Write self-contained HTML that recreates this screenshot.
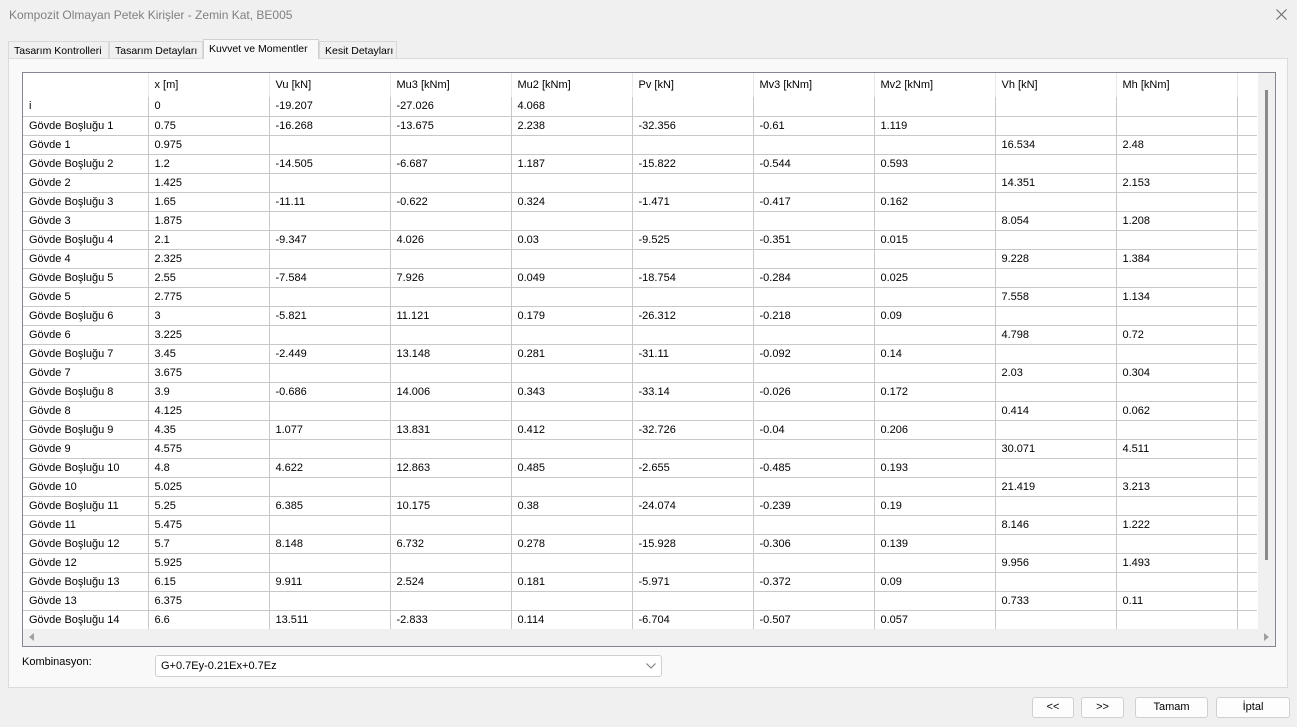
<!DOCTYPE html>
<html><head><meta charset="utf-8"><style>
*{box-sizing:border-box;margin:0;padding:0}
body{width:1297px;height:727px;background:#f0f0f0;font-family:"Liberation Sans",sans-serif;font-size:11px;color:#000;position:relative;overflow:hidden}
.abs{position:absolute}
#title{left:9px;top:8px;font-size:12px;color:#808080}
.tab{position:absolute;top:41px;height:17px;border:1px solid #d9d9d9;border-bottom:none;background:#f0f0f0;padding:3px 0 0 5px;font-size:10.5px;white-space:nowrap;overflow:hidden}
#panel{left:8px;top:58px;width:1280px;height:630px;background:#f9f9f9;border:1px solid #dcdcdc}
#grid{left:22px;top:72px;width:1254px;height:575px;border:1px solid #828790;background:#fff;overflow:hidden}
table{border-collapse:collapse;table-layout:fixed;position:absolute;left:0;top:0}
td{height:19px;border-right:1px solid #c8c8c8;border-bottom:1px solid #c8c8c8;padding:0 0 0 6px;white-space:nowrap;overflow:hidden;line-height:18px}
tr.h td{height:24px;border-bottom:none;border-right-color:#e8e8e8;line-height:22px;vertical-align:top;padding-top:1px}
td.f{border-right:none}
#vs{left:1235px;top:0;width:17px;height:556px;background:#f0f0f0}
#hs{left:0;top:556px;width:1252px;height:17px;background:#f0f0f0}
.btn{position:absolute;top:697px;height:21px;border:1px solid #d0d0d0;border-radius:3px;background:#fdfdfd;text-align:center;line-height:19px;font-size:11px}
</style></head><body>
<div class="abs" id="title">Kompozit Olmayan Petek Kirişler - Zemin Kat, BE005</div>
<svg class="abs" style="left:1276px;top:9px" width="11" height="11"><path d="M0.5 0.5L10.5 10.5M10.5 0.5L0.5 10.5" stroke="#666" stroke-width="1"/></svg>
<div class="abs" id="panel"></div>
<div class="tab" style="left:8px;width:101px">Tasarım Kontrolleri</div>
<div class="tab" style="left:109px;width:94px">Tasarım Detayları</div>
<div class="tab" style="left:203px;top:39px;height:20px;width:116px;background:#f9f9f9;border-color:#d0d0d0">Kuvvet ve Momentler</div>
<div class="tab" style="left:319px;width:78px">Kesit Detayları</div>
<div class="abs" id="grid">
<table>
<colgroup><col style="width:125px"><col style="width:121px"><col style="width:121px"><col style="width:121px"><col style="width:121px"><col style="width:121px"><col style="width:121px"><col style="width:121px"><col style="width:121px"><col style="width:121px"><col style="width:20px"></colgroup>
<tr class="h"><td></td><td>x [m]</td><td>Vu [kN]</td><td>Mu3 [kNm]</td><td>Mu2 [kNm]</td><td>Pv [kN]</td><td>Mv3 [kNm]</td><td>Mv2 [kNm]</td><td>Vh [kN]</td><td>Mh [kNm]</td><td class="f"></td></tr>
<tr><td>i</td><td>0</td><td>-19.207</td><td>-27.026</td><td>4.068</td><td></td><td></td><td></td><td></td><td></td><td class="f"></td></tr>
<tr><td>Gövde Boşluğu 1</td><td>0.75</td><td>-16.268</td><td>-13.675</td><td>2.238</td><td>-32.356</td><td>-0.61</td><td>1.119</td><td></td><td></td><td class="f"></td></tr>
<tr><td>Gövde 1</td><td>0.975</td><td></td><td></td><td></td><td></td><td></td><td></td><td>16.534</td><td>2.48</td><td class="f"></td></tr>
<tr><td>Gövde Boşluğu 2</td><td>1.2</td><td>-14.505</td><td>-6.687</td><td>1.187</td><td>-15.822</td><td>-0.544</td><td>0.593</td><td></td><td></td><td class="f"></td></tr>
<tr><td>Gövde 2</td><td>1.425</td><td></td><td></td><td></td><td></td><td></td><td></td><td>14.351</td><td>2.153</td><td class="f"></td></tr>
<tr><td>Gövde Boşluğu 3</td><td>1.65</td><td>-11.11</td><td>-0.622</td><td>0.324</td><td>-1.471</td><td>-0.417</td><td>0.162</td><td></td><td></td><td class="f"></td></tr>
<tr><td>Gövde 3</td><td>1.875</td><td></td><td></td><td></td><td></td><td></td><td></td><td>8.054</td><td>1.208</td><td class="f"></td></tr>
<tr><td>Gövde Boşluğu 4</td><td>2.1</td><td>-9.347</td><td>4.026</td><td>0.03</td><td>-9.525</td><td>-0.351</td><td>0.015</td><td></td><td></td><td class="f"></td></tr>
<tr><td>Gövde 4</td><td>2.325</td><td></td><td></td><td></td><td></td><td></td><td></td><td>9.228</td><td>1.384</td><td class="f"></td></tr>
<tr><td>Gövde Boşluğu 5</td><td>2.55</td><td>-7.584</td><td>7.926</td><td>0.049</td><td>-18.754</td><td>-0.284</td><td>0.025</td><td></td><td></td><td class="f"></td></tr>
<tr><td>Gövde 5</td><td>2.775</td><td></td><td></td><td></td><td></td><td></td><td></td><td>7.558</td><td>1.134</td><td class="f"></td></tr>
<tr><td>Gövde Boşluğu 6</td><td>3</td><td>-5.821</td><td>11.121</td><td>0.179</td><td>-26.312</td><td>-0.218</td><td>0.09</td><td></td><td></td><td class="f"></td></tr>
<tr><td>Gövde 6</td><td>3.225</td><td></td><td></td><td></td><td></td><td></td><td></td><td>4.798</td><td>0.72</td><td class="f"></td></tr>
<tr><td>Gövde Boşluğu 7</td><td>3.45</td><td>-2.449</td><td>13.148</td><td>0.281</td><td>-31.11</td><td>-0.092</td><td>0.14</td><td></td><td></td><td class="f"></td></tr>
<tr><td>Gövde 7</td><td>3.675</td><td></td><td></td><td></td><td></td><td></td><td></td><td>2.03</td><td>0.304</td><td class="f"></td></tr>
<tr><td>Gövde Boşluğu 8</td><td>3.9</td><td>-0.686</td><td>14.006</td><td>0.343</td><td>-33.14</td><td>-0.026</td><td>0.172</td><td></td><td></td><td class="f"></td></tr>
<tr><td>Gövde 8</td><td>4.125</td><td></td><td></td><td></td><td></td><td></td><td></td><td>0.414</td><td>0.062</td><td class="f"></td></tr>
<tr><td>Gövde Boşluğu 9</td><td>4.35</td><td>1.077</td><td>13.831</td><td>0.412</td><td>-32.726</td><td>-0.04</td><td>0.206</td><td></td><td></td><td class="f"></td></tr>
<tr><td>Gövde 9</td><td>4.575</td><td></td><td></td><td></td><td></td><td></td><td></td><td>30.071</td><td>4.511</td><td class="f"></td></tr>
<tr><td>Gövde Boşluğu 10</td><td>4.8</td><td>4.622</td><td>12.863</td><td>0.485</td><td>-2.655</td><td>-0.485</td><td>0.193</td><td></td><td></td><td class="f"></td></tr>
<tr><td>Gövde 10</td><td>5.025</td><td></td><td></td><td></td><td></td><td></td><td></td><td>21.419</td><td>3.213</td><td class="f"></td></tr>
<tr><td>Gövde Boşluğu 11</td><td>5.25</td><td>6.385</td><td>10.175</td><td>0.38</td><td>-24.074</td><td>-0.239</td><td>0.19</td><td></td><td></td><td class="f"></td></tr>
<tr><td>Gövde 11</td><td>5.475</td><td></td><td></td><td></td><td></td><td></td><td></td><td>8.146</td><td>1.222</td><td class="f"></td></tr>
<tr><td>Gövde Boşluğu 12</td><td>5.7</td><td>8.148</td><td>6.732</td><td>0.278</td><td>-15.928</td><td>-0.306</td><td>0.139</td><td></td><td></td><td class="f"></td></tr>
<tr><td>Gövde 12</td><td>5.925</td><td></td><td></td><td></td><td></td><td></td><td></td><td>9.956</td><td>1.493</td><td class="f"></td></tr>
<tr><td>Gövde Boşluğu 13</td><td>6.15</td><td>9.911</td><td>2.524</td><td>0.181</td><td>-5.971</td><td>-0.372</td><td>0.09</td><td></td><td></td><td class="f"></td></tr>
<tr><td>Gövde 13</td><td>6.375</td><td></td><td></td><td></td><td></td><td></td><td></td><td>0.733</td><td>0.11</td><td class="f"></td></tr>
<tr><td>Gövde Boşluğu 14</td><td>6.6</td><td>13.511</td><td>-2.833</td><td>0.114</td><td>-6.704</td><td>-0.507</td><td>0.057</td><td></td><td></td><td class="f"></td></tr>
</table>
<div class="abs" id="vs"><div class="abs" style="left:7px;top:17px;width:3px;height:470px;background:#8a8a8a"></div></div>
<div class="abs" id="hs"><div class="abs" style="left:6px;top:4px;width:0;height:0;border-top:4px solid transparent;border-bottom:4px solid transparent;border-right:5px solid #a0a0a0"></div><div class="abs" style="left:1241px;top:4px;width:0;height:0;border-top:4px solid transparent;border-bottom:4px solid transparent;border-left:5px solid #a0a0a0"></div></div>
</div>
<div class="abs" style="left:22px;top:656px">Kombinasyon:</div>
<div class="abs" style="left:155px;top:655px;width:507px;height:22px;border:1px solid #d0d0d0;border-radius:3px;background:#fff;padding:4px 0 0 5px">G+0.7Ey-0.21Ex+0.7Ez<svg class="abs" style="right:5px;top:7px" width="10" height="6"><path d="M0.5 0.5L5 5L9.5 0.5" fill="none" stroke="#777" stroke-width="1"/></svg></div>
<div class="btn" style="left:1032px;width:42px">&lt;&lt;</div>
<div class="btn" style="left:1081px;width:43px">&gt;&gt;</div>
<div class="btn" style="left:1135px;width:73px">Tamam</div>
<div class="btn" style="left:1216px;width:74px">İptal</div>
</body></html>
